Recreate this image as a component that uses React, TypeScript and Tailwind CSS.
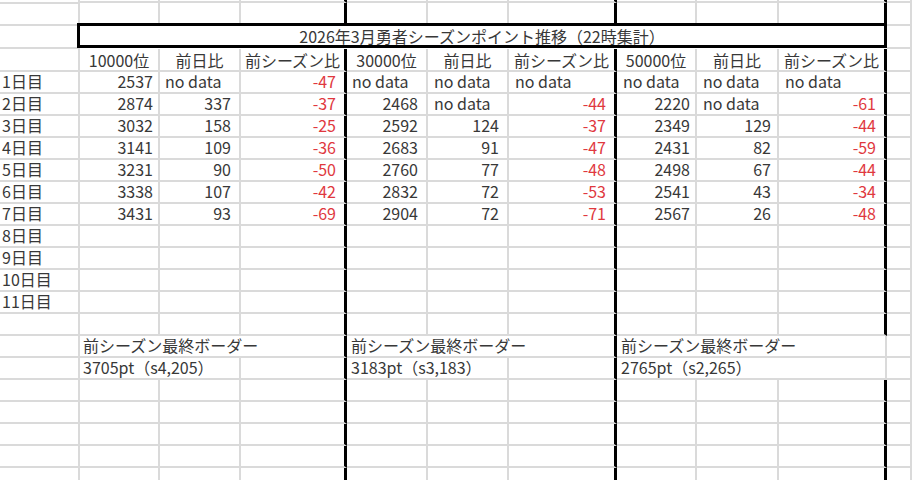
import React from "react";

const W = [
  "w-[80px]",
  "w-[80px]",
  "w-[81px]",
  "w-[106px]",
  "w-[81px]",
  "w-[81px]",
  "w-[108px]",
  "w-[80px]",
  "w-[82px]",
  "w-[108px]",
];
const PR = ["", "pr-[5px]", "pr-[8px]", "pr-[8px]", "pr-[8px]", "pr-[8px]", "pr-[8px]", "pr-[5px]", "pr-[6px]", "pr-[8px]"];
const PL = ["pl-[2px]", "pl-[6px]", "pl-[5px]", "pl-[6px]", "pl-[5px]", "pl-[6px]", "pl-[6px]", "pl-[6px]", "pl-[6px]", "pl-[6px]"];

const G = "border-b-2 border-b-[#dadada]";
const RG = "border-r-2 border-r-[#dadada]";
const RT = "border-r-[3px] border-r-black";

function Cell({
  w,
  thick,
  className = "",
  children,
}: {
  w: string;
  thick?: boolean;
  className?: string;
  children?: React.ReactNode;
}) {
  return (
    <div
      className={`shrink-0 h-full flex items-center whitespace-nowrap ${G} ${thick ? RT : RG} ${w} ${className}`}
    >
      {children}
    </div>
  );
}

function Row({ h, children }: { h: string; children?: React.ReactNode }) {
  return <div className={`flex ${h}`}>{children}</div>;
}

function Tail() {
  return <div className={`flex-1 h-full ${G} ${RG}`} />;
}

function EmptyRow({ h, label }: { h: string; label?: string }) {
  return (
    <Row h={h}>
      {W.map((w, i) => (
        <Cell key={i} w={w} thick={i === 3 || i === 6 || i === 9} className={i === 0 ? `${PL[0]} pb-[2px]` : ""}>
          {i === 0 ? label : null}
        </Cell>
      ))}
      <Tail />
    </Row>
  );
}

type V = string | number | null;
const data: V[][] = [
  [2537, "no data", -47, "no data", "no data", "no data", "no data", "no data", "no data"],
  [2874, 337, -37, 2468, "no data", -44, 2220, "no data", -61],
  [3032, 158, -25, 2592, 124, -37, 2349, 129, -44],
  [3141, 109, -36, 2683, 91, -47, 2431, 82, -59],
  [3231, 90, -50, 2760, 77, -48, 2498, 67, -44],
  [3338, 107, -42, 2832, 72, -53, 2541, 43, -34],
  [3431, 93, -69, 2904, 72, -71, 2567, 26, -48],
];

const headers = ["10000位", "前日比", "前シーズン比", "30000位", "前日比", "前シーズン比", "50000位", "前日比", "前シーズン比"];

export default function App() {
  return (
    <div
      className="w-[912px] h-[480px] overflow-hidden bg-white text-[16px] leading-none text-[#383838]"
      style={{ fontFamily: '"Noto Sans CJK JP", "Noto Sans", sans-serif' }}
    >
      <EmptyRow h="h-[3px]" />
      <EmptyRow h="h-[23px]" />
      {/* title row */}
      <Row h="h-[23px]">
        <Cell w={W[0]} />
        <div className="relative z-10 -ml-[3px] -mt-[3px] w-[810px] h-[25px] shrink-0 border-[3px] border-black bg-white flex items-center justify-center whitespace-nowrap">
          2026年3月勇者シーズンポイント推移（22時集計）
        </div>
        <Tail />
      </Row>
      {/* header */}
      <Row h="h-[23px]">
        <Cell w={W[0]} />
        {headers.map((t, i) => (
          <Cell key={i} w={W[i + 1]} thick={i === 2 || i === 5 || i === 8} className="justify-center pt-[1px]">
            {t}
          </Cell>
        ))}
        <Tail />
      </Row>
      {data.map((r, ri) => (
        <Row key={ri} h="h-[22px]">
          <Cell w={W[0]} className={`${PL[0]} pb-[2px]`}>
            {ri + 1}日目
          </Cell>
          {r.map((v, i) => {
            const col = i + 1;
            const isText = typeof v === "string";
            const red = typeof v === "number" && v < 0;
            return (
              <Cell
                key={i}
                w={W[col]}
                thick={col === 3 || col === 6 || col === 9}
                className={`pb-[2px] ${isText ? `justify-start ${PL[col]}` : `justify-end ${PR[col]}`} ${red ? "text-[#e0383e]" : ""}`}
              >
                {v}
              </Cell>
            );
          })}
          <Tail />
        </Row>
      ))}
      <EmptyRow h="h-[22px]" label="8日目" />
      <EmptyRow h="h-[22px]" label="9日目" />
      <EmptyRow h="h-[22px]" label="10日目" />
      <EmptyRow h="h-[22px]" label="11日目" />
      <EmptyRow h="h-[22px]" />
      {/* last season border label */}
      <Row h="h-[22px]">
        <Cell w={W[0]} />
        <Cell w="w-[267px]" thick className="pl-[3px] pb-[2px]">
          前シーズン最終ボーダー
        </Cell>
        <Cell w="w-[270px]" thick className="pl-[4px] pb-[2px]">
          前シーズン最終ボーダー
        </Cell>
        <Cell w="w-[270px]" className="pl-[4px] pb-[2px]">
          前シーズン最終ボーダー
        </Cell>
        <Tail />
      </Row>
      <Row h="h-[22px]">
        <Cell w={W[0]} />
        <Cell w="w-[161px]" className="pl-[3px] pb-[2px]">
          3705pt（s4,205）
        </Cell>
        <Cell w={W[3]} thick />
        <Cell w="w-[162px]" className="pl-[4px] pb-[2px]">
          3183pt（s3,183）
        </Cell>
        <Cell w={W[6]} thick />
        <Cell w="w-[270px]" className="pl-[4px] pb-[2px]">
          2765pt（s2,265）
        </Cell>
        <Tail />
      </Row>
      <EmptyRow h="h-[22px]" />
      <EmptyRow h="h-[22px]" />
      <EmptyRow h="h-[22px]" />
      <EmptyRow h="h-[22px]" />
      <EmptyRow h="h-[22px]" />
    </div>
  );
}
